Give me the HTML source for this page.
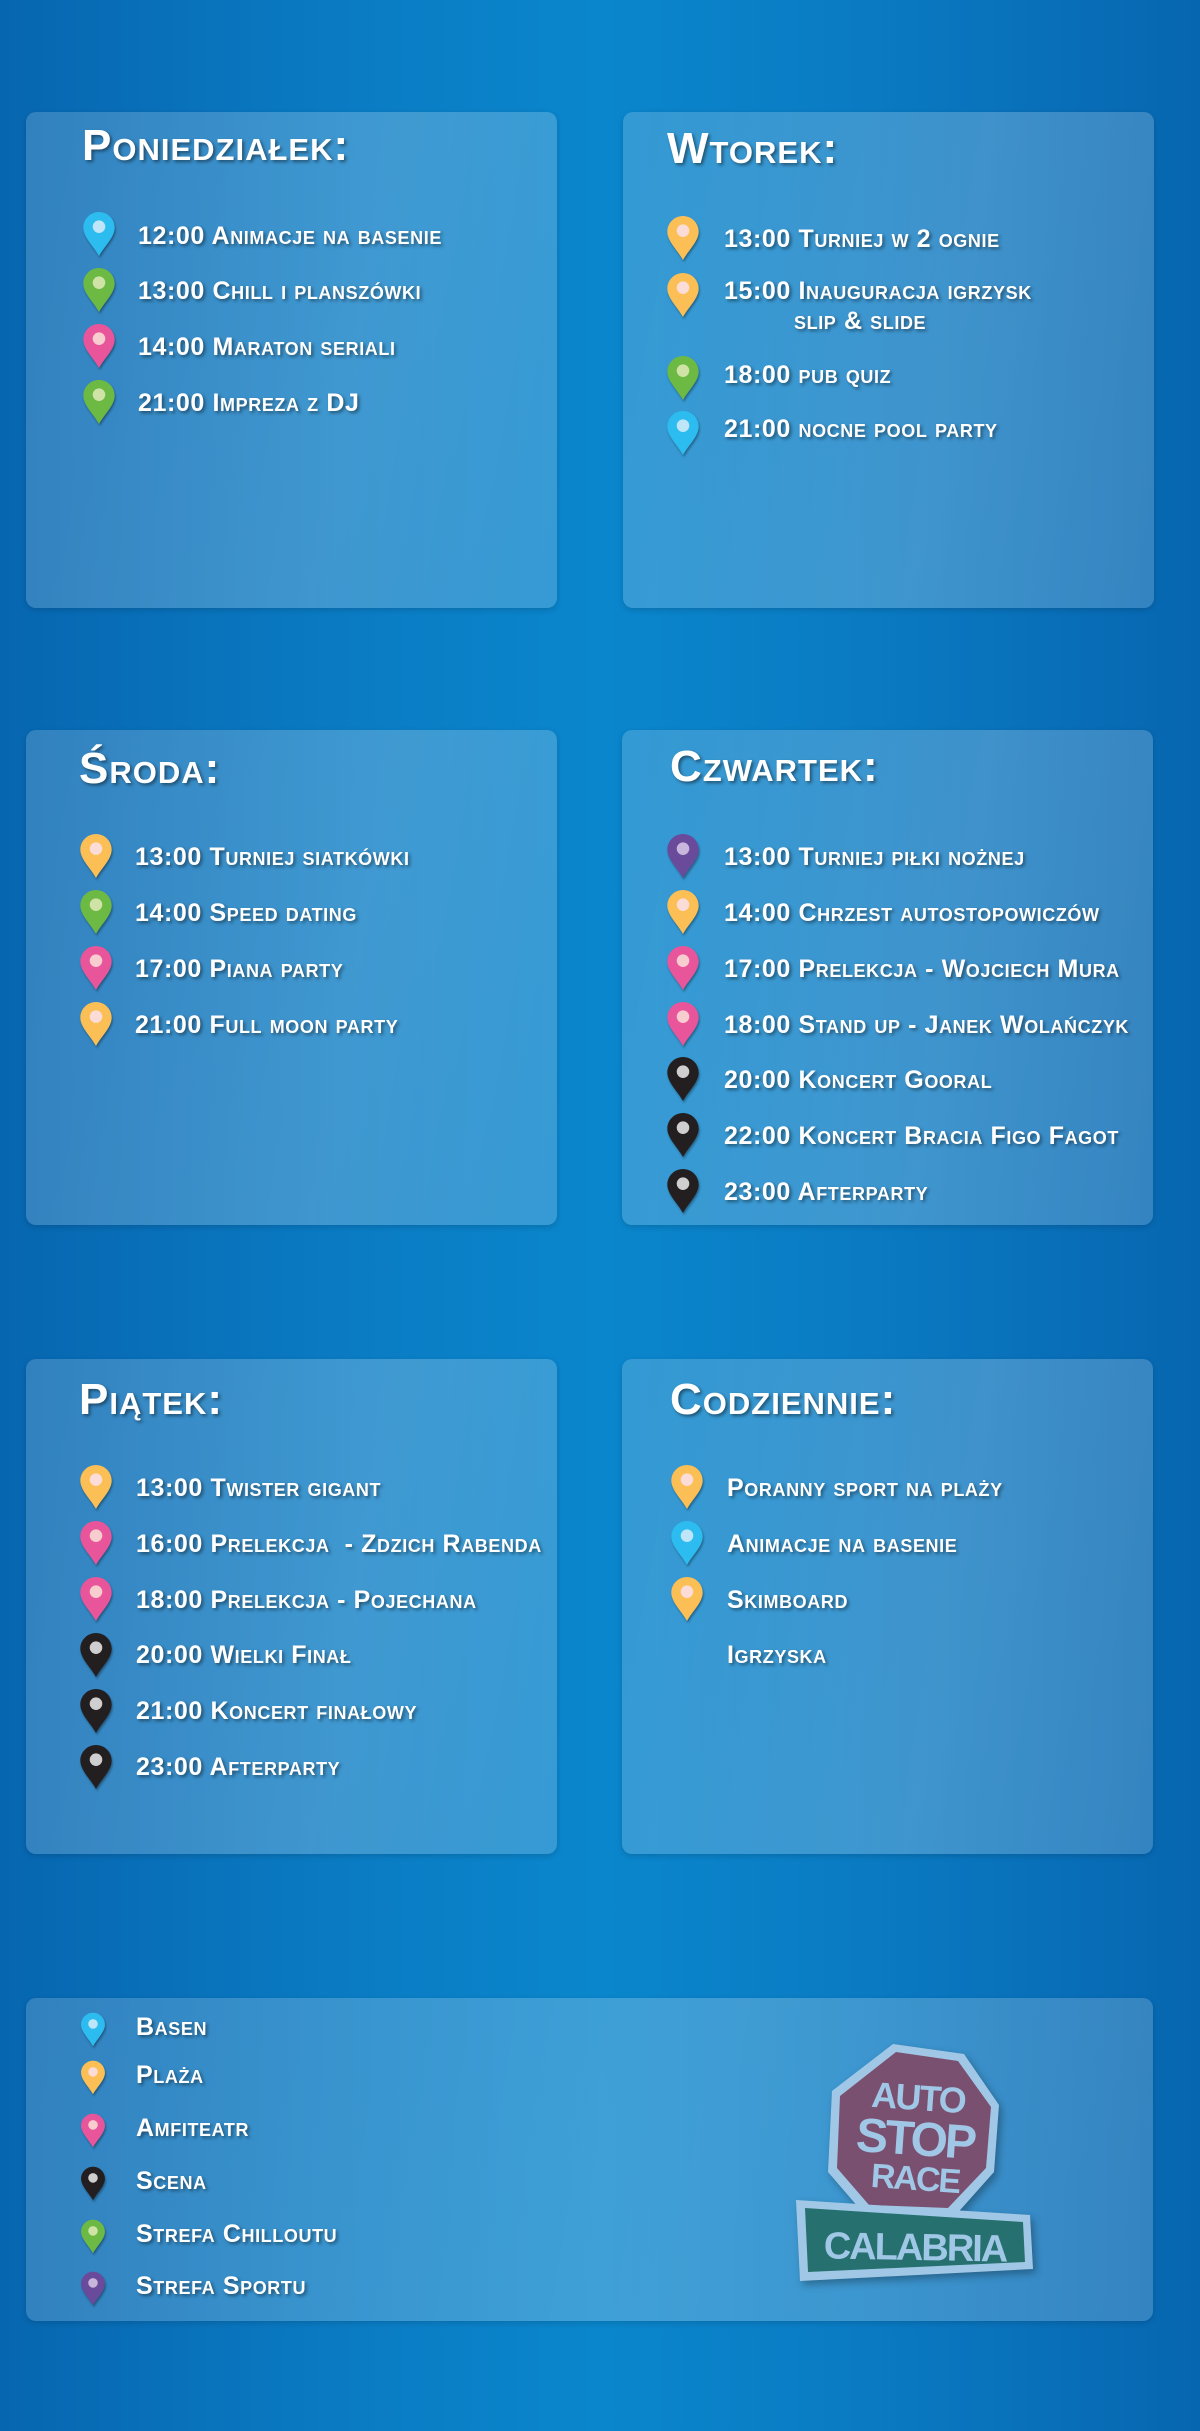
<!DOCTYPE html>
<html><head><meta charset="utf-8"><style>
*{margin:0;padding:0;box-sizing:border-box}
body{width:1200px;height:2431px;position:relative;overflow:hidden;font-family:"Liberation Sans","DejaVu Sans",sans-serif;
background:linear-gradient(90deg,#0766b0 0%,#0a7cc4 30%,#0a86cc 50%,#0a7cc4 70%,#0766b0 100%);}
.p{position:absolute;background:linear-gradient(100deg,rgba(255,255,255,.17),rgba(255,255,255,.22) 60%,rgba(255,255,255,.18));border-radius:10px;box-shadow:0 2px 6px rgba(0,0,0,.15)}
.t{position:absolute;color:#fff;font-family:"Liberation Sans","DejaVu Sans",sans-serif;font-weight:bold;font-variant:small-caps;font-size:44px;letter-spacing:1px;line-height:48px;text-shadow:2px 2px 3px rgba(0,0,0,.45);white-space:nowrap}
.i{position:absolute;color:#fff;font-family:"Liberation Sans","DejaVu Sans",sans-serif;font-weight:bold;font-variant:small-caps;font-size:25px;letter-spacing:.6px;line-height:26px;text-shadow:2px 2px 3px rgba(0,0,0,.45);white-space:nowrap}
svg.pin{position:absolute;width:34px;height:46px;filter:drop-shadow(1px 2px 1px rgba(0,0,0,.35))}
svg.sm{width:26px;height:35px}
</style></head><body>
<svg width="0" height="0" style="position:absolute"><defs>
<symbol id="pin" viewBox="0 0 32 44"><path d="M16 1C7.7 1 1 7.7 1 16c0 9 10 18 15 27 5-9 15-18 15-27C31 7.7 24.3 1 16 1z"/></symbol>
</defs></svg>

<div class="p" style="left:26px;top:112px;width:531px;height:496px"></div>
<div class="p" style="left:623px;top:112px;width:531px;height:496px"></div>
<div class="p" style="left:26px;top:730px;width:531px;height:495px"></div>
<div class="p" style="left:622px;top:730px;width:531px;height:495px"></div>
<div class="p" style="left:26px;top:1359px;width:531px;height:495px"></div>
<div class="p" style="left:622px;top:1359px;width:531px;height:495px"></div>
<div class="p" style="left:26px;top:1998px;width:1127px;height:323px"></div>

<div class="t" style="left:82px;top:122px">Poniedziałek:</div>
<div class="t" style="left:667px;top:125px">Wtorek:</div>
<div class="t" style="left:79px;top:745px">Środa:</div>
<div class="t" style="left:670px;top:743px">Czwartek:</div>
<div class="t" style="left:79px;top:1376px">Piątek:</div>
<div class="t" style="left:670px;top:1376px">Codziennie:</div>

<svg class="pin" style="left:82px;top:211px" viewBox="0 0 32 44"><use href="#pin" fill="#2dbcef"/><circle cx="16" cy="15" r="6" fill="#bfe6f8"/></svg>
<svg class="pin" style="left:82px;top:267px" viewBox="0 0 32 44"><use href="#pin" fill="#6cb944"/><circle cx="16" cy="15" r="6" fill="#cfe3a6"/></svg>
<svg class="pin" style="left:82px;top:323px" viewBox="0 0 32 44"><use href="#pin" fill="#e9559b"/><circle cx="16" cy="15" r="6" fill="#f8cdd0"/></svg>
<svg class="pin" style="left:82px;top:379px" viewBox="0 0 32 44"><use href="#pin" fill="#6cb944"/><circle cx="16" cy="15" r="6" fill="#cfe3a6"/></svg>
<div class="i" style="left:138px;top:223px">12:00 Animacje na basenie</div>
<div class="i" style="left:138px;top:278px">13:00 Chill i planszówki</div>
<div class="i" style="left:138px;top:334px">14:00 Maraton seriali</div>
<div class="i" style="left:138px;top:390px">21:00 Impreza z DJ</div>

<svg class="pin" style="left:666px;top:215px" viewBox="0 0 32 44"><use href="#pin" fill="#fbbf55"/><circle cx="16" cy="15" r="6" fill="#fbdcd6"/></svg>
<svg class="pin" style="left:666px;top:272px" viewBox="0 0 32 44"><use href="#pin" fill="#fbbf55"/><circle cx="16" cy="15" r="6" fill="#fbdcd6"/></svg>
<svg class="pin" style="left:666px;top:355px" viewBox="0 0 32 44"><use href="#pin" fill="#6cb944"/><circle cx="16" cy="15" r="6" fill="#cfe3a6"/></svg>
<svg class="pin" style="left:666px;top:410px" viewBox="0 0 32 44"><use href="#pin" fill="#2dbcef"/><circle cx="16" cy="15" r="6" fill="#bfe6f8"/></svg>
<div class="i" style="left:724px;top:226px">13:00 Turniej w 2 ognie</div>
<div class="i" style="left:724px;top:278px">15:00 Inauguracja igrzysk</div>
<div class="i" style="left:794px;top:308px">slip &amp; slide</div>
<div class="i" style="left:724px;top:362px">18:00 pub quiz</div>
<div class="i" style="left:724px;top:416px">21:00 nocne pool party</div>

<svg class="pin" style="left:79px;top:833px" viewBox="0 0 32 44"><use href="#pin" fill="#fbbf55"/><circle cx="16" cy="15" r="6" fill="#fbdcd6"/></svg>
<svg class="pin" style="left:79px;top:889px" viewBox="0 0 32 44"><use href="#pin" fill="#6cb944"/><circle cx="16" cy="15" r="6" fill="#cfe3a6"/></svg>
<svg class="pin" style="left:79px;top:945px" viewBox="0 0 32 44"><use href="#pin" fill="#e9559b"/><circle cx="16" cy="15" r="6" fill="#f8cdd0"/></svg>
<svg class="pin" style="left:79px;top:1001px" viewBox="0 0 32 44"><use href="#pin" fill="#fbbf55"/><circle cx="16" cy="15" r="6" fill="#fbdcd6"/></svg>
<div class="i" style="left:135px;top:844px">13:00 Turniej siatkówki</div>
<div class="i" style="left:135px;top:900px">14:00 Speed dating</div>
<div class="i" style="left:135px;top:956px">17:00 Piana party</div>
<div class="i" style="left:135px;top:1012px">21:00 Full moon party</div>

<svg class="pin" style="left:666px;top:833px" viewBox="0 0 32 44"><use href="#pin" fill="#6a4a9b"/><circle cx="16" cy="15" r="6" fill="#c8b6dc"/></svg>
<svg class="pin" style="left:666px;top:889px" viewBox="0 0 32 44"><use href="#pin" fill="#fbbf55"/><circle cx="16" cy="15" r="6" fill="#fbdcd6"/></svg>
<svg class="pin" style="left:666px;top:945px" viewBox="0 0 32 44"><use href="#pin" fill="#e9559b"/><circle cx="16" cy="15" r="6" fill="#f8cdd0"/></svg>
<svg class="pin" style="left:666px;top:1001px" viewBox="0 0 32 44"><use href="#pin" fill="#e9559b"/><circle cx="16" cy="15" r="6" fill="#f8cdd0"/></svg>
<svg class="pin" style="left:666px;top:1056px" viewBox="0 0 32 44"><use href="#pin" fill="#231f20"/><circle cx="16" cy="15" r="6" fill="#cfcfcf"/></svg>
<svg class="pin" style="left:666px;top:1112px" viewBox="0 0 32 44"><use href="#pin" fill="#231f20"/><circle cx="16" cy="15" r="6" fill="#cfcfcf"/></svg>
<svg class="pin" style="left:666px;top:1168px" viewBox="0 0 32 44"><use href="#pin" fill="#231f20"/><circle cx="16" cy="15" r="6" fill="#cfcfcf"/></svg>
<div class="i" style="left:724px;top:844px">13:00 Turniej piłki nożnej</div>
<div class="i" style="left:724px;top:900px">14:00 Chrzest autostopowiczów</div>
<div class="i" style="left:724px;top:956px">17:00 Prelekcja - Wojciech Mura</div>
<div class="i" style="left:724px;top:1012px">18:00 Stand up - Janek Wolańczyk</div>
<div class="i" style="left:724px;top:1067px">20:00 Koncert Gooral</div>
<div class="i" style="left:724px;top:1123px">22:00 Koncert Bracia Figo Fagot</div>
<div class="i" style="left:724px;top:1179px">23:00 Afterparty</div>

<svg class="pin" style="left:79px;top:1464px" viewBox="0 0 32 44"><use href="#pin" fill="#fbbf55"/><circle cx="16" cy="15" r="6" fill="#fbdcd6"/></svg>
<svg class="pin" style="left:79px;top:1520px" viewBox="0 0 32 44"><use href="#pin" fill="#e9559b"/><circle cx="16" cy="15" r="6" fill="#f8cdd0"/></svg>
<svg class="pin" style="left:79px;top:1576px" viewBox="0 0 32 44"><use href="#pin" fill="#e9559b"/><circle cx="16" cy="15" r="6" fill="#f8cdd0"/></svg>
<svg class="pin" style="left:79px;top:1632px" viewBox="0 0 32 44"><use href="#pin" fill="#231f20"/><circle cx="16" cy="15" r="6" fill="#cfcfcf"/></svg>
<svg class="pin" style="left:79px;top:1688px" viewBox="0 0 32 44"><use href="#pin" fill="#231f20"/><circle cx="16" cy="15" r="6" fill="#cfcfcf"/></svg>
<svg class="pin" style="left:79px;top:1744px" viewBox="0 0 32 44"><use href="#pin" fill="#231f20"/><circle cx="16" cy="15" r="6" fill="#cfcfcf"/></svg>
<div class="i" style="left:136px;top:1475px">13:00 Twister gigant</div>
<div class="i" style="left:136px;top:1531px">16:00 Prelekcja&nbsp; - Zdzich Rabenda</div>
<div class="i" style="left:136px;top:1587px">18:00 Prelekcja - Pojechana</div>
<div class="i" style="left:136px;top:1642px">20:00 Wielki Finał</div>
<div class="i" style="left:136px;top:1698px">21:00 Koncert finałowy</div>
<div class="i" style="left:136px;top:1754px">23:00 Afterparty</div>

<svg class="pin" style="left:670px;top:1464px" viewBox="0 0 32 44"><use href="#pin" fill="#fbbf55"/><circle cx="16" cy="15" r="6" fill="#fbdcd6"/></svg>
<svg class="pin" style="left:670px;top:1520px" viewBox="0 0 32 44"><use href="#pin" fill="#2dbcef"/><circle cx="16" cy="15" r="6" fill="#bfe6f8"/></svg>
<svg class="pin" style="left:670px;top:1576px" viewBox="0 0 32 44"><use href="#pin" fill="#fbbf55"/><circle cx="16" cy="15" r="6" fill="#fbdcd6"/></svg>
<div class="i" style="left:727px;top:1475px">Poranny sport na plaży</div>
<div class="i" style="left:727px;top:1531px">Animacje na basenie</div>
<div class="i" style="left:727px;top:1587px">Skimboard</div>
<div class="i" style="left:727px;top:1642px">Igrzyska</div>

<svg class="pin sm" style="left:80px;top:2012px" viewBox="0 0 32 44"><use href="#pin" fill="#2dbcef"/><circle cx="16" cy="15" r="6" fill="#bfe6f8"/></svg>
<svg class="pin sm" style="left:80px;top:2060px" viewBox="0 0 32 44"><use href="#pin" fill="#fbbf55"/><circle cx="16" cy="15" r="6" fill="#fbdcd6"/></svg>
<svg class="pin sm" style="left:80px;top:2113px" viewBox="0 0 32 44"><use href="#pin" fill="#e9559b"/><circle cx="16" cy="15" r="6" fill="#f8cdd0"/></svg>
<svg class="pin sm" style="left:80px;top:2166px" viewBox="0 0 32 44"><use href="#pin" fill="#231f20"/><circle cx="16" cy="15" r="6" fill="#cfcfcf"/></svg>
<svg class="pin sm" style="left:80px;top:2219px" viewBox="0 0 32 44"><use href="#pin" fill="#6cb944"/><circle cx="16" cy="15" r="6" fill="#cfe3a6"/></svg>
<svg class="pin sm" style="left:80px;top:2271px" viewBox="0 0 32 44"><use href="#pin" fill="#6a4a9b"/><circle cx="16" cy="15" r="6" fill="#c8b6dc"/></svg>
<div class="i" style="left:136px;top:2014px">Basen</div>
<div class="i" style="left:136px;top:2062px">Plaża</div>
<div class="i" style="left:136px;top:2115px">Amfiteatr</div>
<div class="i" style="left:136px;top:2168px">Scena</div>
<div class="i" style="left:136px;top:2221px">Strefa Chilloutu</div>
<div class="i" style="left:136px;top:2273px">Strefa Sportu</div>

<svg style="position:absolute;left:790px;top:2040px;filter:drop-shadow(3px 4px 4px rgba(0,0,0,.3))" width="260" height="245" viewBox="0 0 260 245">
  <polygon points="103,4 174,14 209,65 204,132 163,178 75,175 38,132 42,51" fill="#a0c8e6"/>
  <polygon points="106,12 168,21 201,67 196,128 158,168 79,165 47,128 50,56" fill="#7a5070"/>
  <text x="128" y="70" text-anchor="middle" font-family="Liberation Sans,sans-serif" font-weight="bold" font-size="36" fill="#a0c8e6" transform="rotate(4 128 60)" letter-spacing="-2">AUTO</text>
  <text x="125" y="115" text-anchor="middle" font-family="Liberation Sans,sans-serif" font-weight="bold" font-size="48" fill="#a0c8e6" transform="rotate(4 125 100)" letter-spacing="-3">STOP</text>
  <text x="125" y="150" text-anchor="middle" font-family="Liberation Sans,sans-serif" font-weight="bold" font-size="34" fill="#a0c8e6" transform="rotate(4 125 140)" letter-spacing="-2">RACE</text>
  <polygon points="6,160 240,175 243,229 10,241" fill="#a0c8e6"/>
  <polygon points="15,168 233,182 235,222 18,232" fill="#26716f"/>
  <text x="125" y="220" text-anchor="middle" font-family="Liberation Sans,sans-serif" font-weight="bold" font-size="38" fill="#a0c8e6" letter-spacing="-2" transform="rotate(1 125 210)">CALABRIA</text>
</svg>
</body></html>
